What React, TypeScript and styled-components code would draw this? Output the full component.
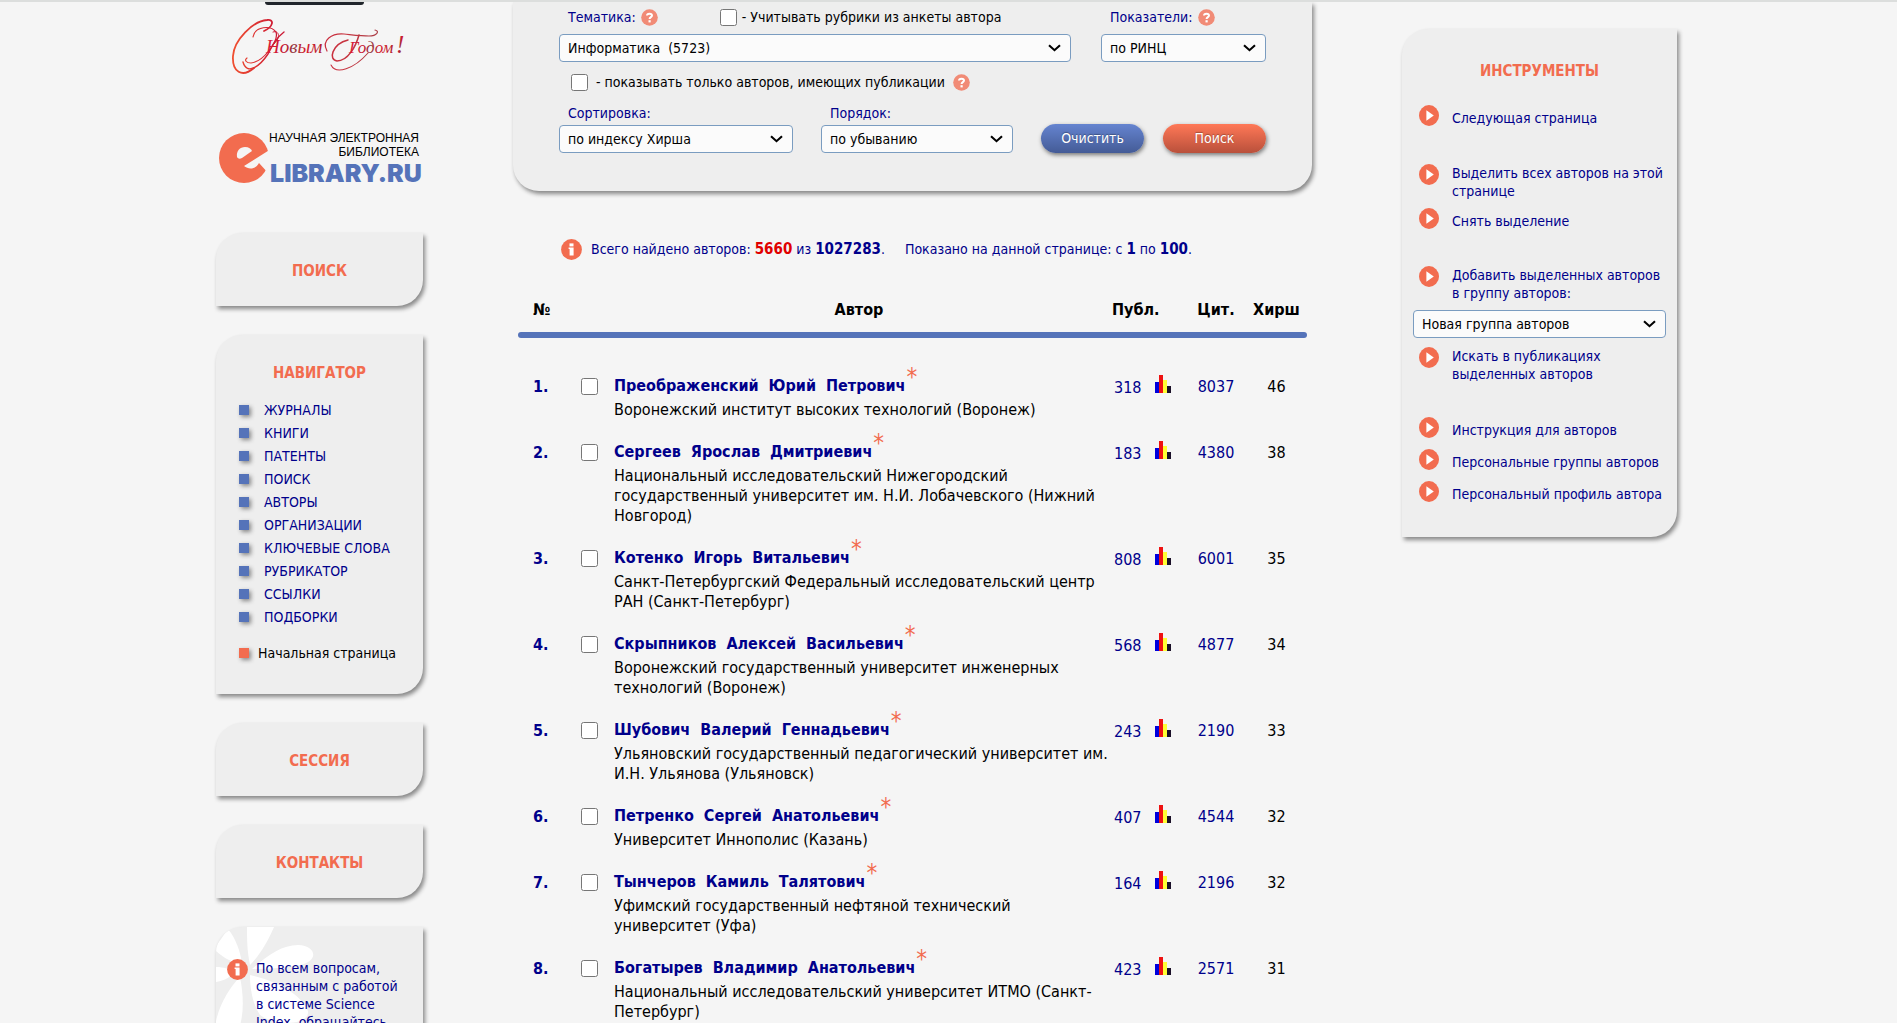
import React from "react";
import styled, { createGlobalStyle } from "styled-components";

const font = `"DejaVu Sans Condensed", "Noto Sans", sans-serif`;
const navy = "#00008b";
const coral = "#f26c4f";
const blue = "#5573b9";

const GlobalStyle = createGlobalStyle`
  * { box-sizing: border-box; }
  body { margin: 0; background: #f5f5f5; color: #000; font-family: ${font}; font-size: 14px; }
  a { color: ${navy}; text-decoration: none; }
`;

const Page = styled.div`
  height: 100vh;
  overflow: hidden;
  border-top: 2px solid #dcdedd;
`;

const Shell = styled.div`
  max-width: 1465px;
  margin: 0 auto;
  padding-right: 4px;
  display: grid;
  grid-template-columns: 207px minmax(0, 1fr) 275px;
  gap: 90px;
  align-items: start;
`;

const Sidebar = styled.aside`
  display: flex;
  flex-direction: column;
  gap: 29px;
`;

const Brand = styled.header`
  height: 202px;
  display: flex;
  flex-direction: column;
`;

const BrandArt = styled.svg`
  display: block;
  width: 207px;
  overflow: visible;
`;

const Panel = styled.section`
  position: relative;
  background: #eee;
  border-radius: 26px 0 26px 0;
  box-shadow: 2px 3px 4px #888;
`;

const PanelTitle = styled.h2`
  margin: 0;
  font-size: 15px;
  line-height: 20px;
  text-align: center;
  color: ${coral};
`;

const ShortPanel = styled(Panel)`
  padding: 28px 0 25px;
`;

const NavPanel = styled(Panel)`
  height: 359px;
  padding: 28px 22px;
`;

const NavList = styled.ul`
  list-style: none;
  margin: 15px 0 0;
  padding: 0;
`;

const NavItem = styled.li<{ $home?: boolean }>`
  display: flex;
  align-items: center;
  gap: ${(p) => (p.$home ? 9 : 15)}px;
  height: 23px;
  white-space: nowrap;
  margin-top: ${(p) => (p.$home ? 13 : 0)}px;
  a { color: ${(p) => (p.$home ? "#000" : navy)}; }
  &::before {
    content: "";
    width: 10px;
    height: 10px;
    margin-left: 1px;
    background: ${(p) => (p.$home ? coral : blue)};
    box-shadow: 2px 2px 4px #888;
  }
`;

const InfoPanel = styled(Panel)`
  height: 200px;
  overflow: hidden;
  padding: 32px 11px;
`;

const Flower = styled.svg`
  position: absolute;
  left: 0;
  top: 0;
`;

const InfoBody = styled.div`
  position: relative;
  display: flex;
  gap: 8px;
  color: ${navy};
  line-height: 18px;
`;

const InfoText = styled.p`
  margin: 0;
  white-space: nowrap;
`;

const FilterForm = styled.form`
  height: 189px;
  padding: 2px 46px 0 46px;
  background: #eee;
  border-radius: 0 0 26px 26px;
  box-shadow: 2px 3px 4px #888;
`;

const FilterRow = styled.div<{ $gap: number }>`
  display: flex;
  align-items: flex-end;
  gap: ${(p) => p.$gap}px;
`;

const Field = styled.div<{ $width?: number }>`
  display: flex;
  flex-direction: column;
  flex: ${(p) => (p.$width ? "none" : "1")};
  width: ${(p) => (p.$width ? p.$width + "px" : "auto")};
`;

const OrderField = styled(Field)`
  margin-left: 28px;
`;

const FieldHead = styled.div`
  display: flex;
  align-items: center;
  height: 26px;
  margin-bottom: 4px;
  padding-left: 9px;
  gap: 5px;
  color: ${navy};
`;

const SortHead = styled(FieldHead)`
  height: 21px;
  margin-bottom: 2px;
`;

const CheckLine = styled.div<{ $inset?: boolean }>`
  display: flex;
  align-items: center;
  gap: ${(p) => (p.$inset ? 8 : 5)}px;
  height: ${(p) => (p.$inset ? 40 : 26)}px;
  padding-left: ${(p) => (p.$inset ? 12 : 57)}px;
  color: #000;
`;

const Tick = styled.input`
  width: 17px;
  height: 17px;
  margin: 0;
  flex: none;
`;

const SelectBox = styled.div`
  position: relative;
  display: flex;
  svg {
    position: absolute;
    right: 10px;
    top: 10px;
    pointer-events: none;
  }
`;

const SelectInput = styled.select`
  appearance: none;
  width: 100%;
  height: 28px;
  padding: 0 28px 0 8px;
  border: 1px solid #7a9cc0;
  border-radius: 4px;
  background-color: #fbfbfb;
  color: #000;
  font-family: ${font};
  font-size: 14px;
`;

const Select = ({ children, ...rest }: React.ComponentProps<"select">) => (
  <SelectBox>
    <SelectInput {...rest}>{children}</SelectInput>
    <svg width="13" height="8" viewBox="0 0 13 8" aria-hidden="true">
      <path d="M1 1.2 L6.5 6.2 L12 1.2" fill="none" stroke="#000" strokeWidth="2.1" />
    </svg>
  </SelectBox>
);

const Button = styled.button<{ $kind: "blue" | "red" }>`
  width: 103px;
  height: 29px;
  margin-left: ${(p) => (p.$kind === "red" ? 19 : 28)}px;
  padding: 0 0 2px;
  border: 0;
  border-radius: 15px;
  background: ${(p) =>
    p.$kind === "red"
      ? "linear-gradient(#ff7857, #b9503b)"
      : "linear-gradient(#6584d0, #445b96)"};
  box-shadow: 1px 2px 4px #777;
  color: #fff;
  font-family: ${font};
  font-size: 14px;
  text-shadow: 0 -1px 1px rgba(0, 0, 0, 0.3);
`;

const Summary = styled.div`
  display: flex;
  align-items: center;
  gap: 9px;
  margin: 45px 0 0 48px;
  height: 26px;
  color: ${navy};
  white-space: pre;
  b { font-size: 15px; }
`;

const Found = styled.b`
  color: #e00000;
`;

const Authors = styled.table`
  width: calc(100% - 10px);
  margin: 33px 5px 0;
  table-layout: fixed;
  border-collapse: collapse;
  font-size: 16px;
  th, td { padding: 0; vertical-align: top; }
`;

const HeadCell = styled.th<{ $left?: number }>`
  height: 37px;
  line-height: 30px;
  text-align: ${(p) => (p.$left ? "left" : "center")};
  && { padding-left: ${(p) => p.$left ?? 0}px; }
`;

const Rule = styled.div`
  height: 6px;
  margin-bottom: 37px;
  border-radius: 3px;
  background: ${blue};
`;

const NumberCell = styled.td`
  && { padding-left: 15px; }
  color: ${navy};
  font-weight: bold;
  line-height: 24px;
`;

const TickCell = styled.td`
  && { padding: 3px 0 0 10px; }
`;

const AuthorCell = styled.td`
  && { padding-bottom: 21px; }
`;

const AuthorName = styled.a`
  display: flex;
  height: 25px;
  line-height: 21px;
  font-weight: bold;
  white-space: pre;
`;

const Star = styled.span`
  margin: -8px 0 0 1px;
  color: ${coral};
  font-size: 24px;
  font-weight: normal;
`;

const Affiliation = styled.div`
  line-height: 20px;
  white-space: nowrap;
`;

const Publications = styled.div`
  display: flex;
  gap: 14px;
  padding-left: 10px;
  line-height: 26px;
`;

const CountCell = styled.td`
  text-align: center;
  line-height: 24px;
`;

const Tools = styled(Panel)`
  height: 508px;
  margin-top: 27px;
  padding: 32px 11px;
`;

const ToolList = styled.div`
  display: flex;
  flex-direction: column;
  padding-top: 24px;
`;

const Tool = styled.a<{ $before?: number; $drop?: number }>`
  display: flex;
  gap: 13px;
  margin-top: ${(p) => p.$before ?? 0}px;
  padding-left: 6px;
  line-height: 18px;
  svg { flex: none; }
  span { padding-top: ${(p) => p.$drop ?? 0}px; white-space: pre; }
`;

const ToolSelect = styled.div`
  margin: 8px 0 9px;
`;

const HelpIcon = () => (
  <svg width="17" height="17" viewBox="0 0 17 17" aria-hidden="true">
    <circle cx="8.5" cy="8.5" r="8.3" fill="#f18b76" />
    <path d="M6 6.6 C6 4 11 4 11 6.6 C11 8.2 8.6 8.1 8.6 10" fill="none" stroke="#fff" strokeWidth="2" />
    <rect x="7.5" y="11.2" width="2.2" height="2.2" fill="#fff" />
  </svg>
);

const InfoGlyph = styled.svg`
  flex: none;
`;

const InfoIcon = () => (
  <InfoGlyph width="21" height="21" viewBox="0 0 21 21" aria-hidden="true">
    <circle cx="10.5" cy="10.5" r="10.4" fill={coral} />
    <rect x="8.5" y="4.4" width="4" height="3" fill="#fff" />
    <path d="M7.6 8.4H12.6V16.6H8.6V10H7.6Z" fill="#fff" />
  </InfoGlyph>
);

const PlayIcon = () => (
  <svg width="20" height="21" viewBox="0 0 20 21" aria-hidden="true">
    <ellipse cx="10" cy="10.5" rx="10" ry="10.4" fill={coral} />
    <path d="M7.4 5.3V15.7L14.8 10.5Z" fill="#fff" />
  </svg>
);

const BarsIcon = () => (
  <svg width="16" height="18" viewBox="0 0 16 18" aria-hidden="true">
    <rect x="0" y="7" width="4" height="11" fill="#0000dd" />
    <rect x="4" y="0" width="4" height="18" fill="#ee1111" />
    <rect x="8" y="5" width="4" height="13" fill="#ffff33" />
    <rect x="12" y="11" width="4" height="7" fill="#1a1028" />
  </svg>
);

const Greeting = () => (
  <BrandArt height="100" viewBox="0 0 207 100" role="img" aria-label="С Новым Годом!">
    <defs>
      <linearGradient id="festive" x1="0" x2="1">
        <stop offset="0" stopColor="#e0203a" />
        <stop offset="0.35" stopColor="#c41230" />
        <stop offset="0.5" stopColor="#8e3440" />
        <stop offset="0.7" stopColor="#d8182c" />
        <stop offset="1" stopColor="#b01c2c" />
      </linearGradient>
      <linearGradient id="swash" gradientUnits="userSpaceOnUse" x1="16" y1="0" x2="165" y2="0">
        <stop offset="0" stopColor="#f05030" />
        <stop offset="0.3" stopColor="#cc1834" />
        <stop offset="0.75" stopColor="#c83440" />
        <stop offset="1" stopColor="#a84048" />
      </linearGradient>
    </defs>
    <rect x="49" y="-3" width="99" height="6" rx="3" fill="#20252b" />
    <g fill="none" stroke="url(#swash)" strokeLinecap="round">
      <path d="M48 29 C57 25 59 17 51 18 C37 19 18 38 17 54 C16 70 26 76 38 66" strokeWidth="1.8" />
      <path d="M37 35 C39 24 55 23 60 30 C63 39 47 60 35 61 C30 61 28 58 31 56" strokeWidth="1.2" />
      <path d="M27 60 C31 74 44 64 52 52 C56 44 60 36 68 30" strokeWidth="1.4" />
      <path d="M57 30 C62 28 66 34 58 42" strokeWidth="1" />
      <path d="M111 49 C105 38 116 31 128 32 C138 33 146 34 153 34 C161 34 164 29 159 28" strokeWidth="1.2" />
      <path d="M132 38 C116 42 112 58 121 59 C132 59 140 44 143 33" strokeWidth="1.5" />
      <path d="M115 63 C120 73 138 67 152 51" strokeWidth="1.1" />
    </g>
    <g fill="url(#festive)" fontFamily="'Liberation Serif', serif" fontStyle="italic">
      <text x="50" y="51" fontSize="19">Новым</text>
      <text x="133" y="51" fontSize="17">Годом</text>
      <text x="180" y="51" fontSize="25">!</text>
    </g>
  </BrandArt>
);

const Logo = () => (
  <BrandArt height="102" viewBox="0 100 207 102" role="img" aria-label="Научная электронная библиотека eLIBRARY.RU">
    <circle cx="28" cy="156" r="25" fill={coral} />
    <path d="M21 155 C20 149 24 145 29 145 C33 145 35 147 36 149 L26 156 C24 157 22 157 21 155Z" fill="#f5f5f5" />
    <path d="M55 147 L28 164 C33 168 40 167 43 161 L53 172 L58 150Z" fill="#f5f5f5" />
    <g fontFamily="'Liberation Sans', Arial, sans-serif" fontSize="12" textAnchor="end">
      <text x="203" y="140">НАУЧНАЯ ЭЛЕКТРОННАЯ</text>
      <text x="203" y="154">БИБЛИОТЕКА</text>
    </g>
    <text x="54" y="180" fontFamily="Inter, sans-serif" fontWeight="900" fontSize="25" fill={blue}>LIBRARY.RU</text>
  </BrandArt>
);

const navLinks = ["ЖУРНАЛЫ", "КНИГИ", "ПАТЕНТЫ", "ПОИСК", "АВТОРЫ", "ОРГАНИЗАЦИИ", "КЛЮЧЕВЫЕ СЛОВА", "РУБРИКАТОР", "ССЫЛКИ", "ПОДБОРКИ"];

const authors: [string, string[], number, number, number][] = [
  ["Преображенский  Юрий  Петрович", ["Воронежский институт высоких технологий (Воронеж)"], 318, 8037, 46],
  ["Сергеев  Ярослав  Дмитриевич", ["Национальный исследовательский Нижегородский", "государственный университет им. Н.И. Лобачевского (Нижний", "Новгород)"], 183, 4380, 38],
  ["Котенко  Игорь  Витальевич", ["Санкт-Петербургский Федеральный исследовательский центр", "РАН (Санкт-Петербург)"], 808, 6001, 35],
  ["Скрыпников  Алексей  Васильевич", ["Воронежский государственный университет инженерных", "технологий (Воронеж)"], 568, 4877, 34],
  ["Шубович  Валерий  Геннадьевич", ["Ульяновский государственный педагогический университет им.", "И.Н. Ульянова (Ульяновск)"], 243, 2190, 33],
  ["Петренко  Сергей  Анатольевич", ["Университет Иннополис (Казань)"], 407, 4544, 32],
  ["Тынчеров  Камиль  Талятович", ["Уфимский государственный нефтяной технический", "университет (Уфа)"], 164, 2196, 32],
  ["Богатырев  Владимир  Анатольевич", ["Национальный исследовательский университет ИТМО (Санкт-", "Петербург)"], 423, 2571, 31],
];

const Lines = ({ parts }: { parts: string[] }) => (
  <>
    {parts.map((part, i) => (
      <React.Fragment key={part}>
        {i > 0 && <br />}
        {part}
      </React.Fragment>
    ))}
  </>
);

export default function App() {
  return (
    <Page>
      <GlobalStyle />
      <Shell>
        <Sidebar>
          <Brand>
            <Greeting />
            <Logo />
          </Brand>
          <ShortPanel><PanelTitle>ПОИСК</PanelTitle></ShortPanel>
          <NavPanel>
            <PanelTitle>НАВИГАТОР</PanelTitle>
            <NavList>
              {navLinks.map((link) => (
                <NavItem key={link}><a href="#">{link}</a></NavItem>
              ))}
              <NavItem $home><a href="#">Начальная страница</a></NavItem>
            </NavList>
          </NavPanel>
          <ShortPanel><PanelTitle>СЕССИЯ</PanelTitle></ShortPanel>
          <ShortPanel><PanelTitle>КОНТАКТЫ</PanelTitle></ShortPanel>
          <InfoPanel>
            <Flower width="110" height="110" viewBox="0 0 110 110" aria-hidden="true">
              <g fill="#fff">
                <path d="M34 38 C31 24 31 12 31 0 H58 C52 14 44 28 34 38Z" />
                <path d="M36 42 C52 28 66 18 82 18 C102 19 102 35 84 38 C68 41 54 42 36 42Z" />
                <path d="M34 48 C60 54 84 66 92 84 C94 98 60 100 44 88 C36 76 34 60 34 48Z" />
                <path d="M24 50 C28 70 28 90 22 104 H0 V94 C4 76 14 60 24 50Z" />
                <path d="M26 36 C24 24 20 12 12 2 L-2 22 C6 30 16 36 26 36Z" />
                <path d="M18 46 C12 52 6 54 0 55 V40 C8 40 14 42 18 46Z" />
              </g>
            </Flower>
            <InfoBody>
              <InfoIcon />
              <InfoText>
                <Lines parts={["По всем вопросам,", "связанным с работой", "в системе Science", "Index, обращайтесь"]} />
              </InfoText>
            </InfoBody>
          </InfoPanel>
        </Sidebar>

        <main>
          <FilterForm>
            <FilterRow $gap={30}>
              <Field>
                <FieldHead>
                  <label htmlFor="topic">Тематика:</label>
                  <HelpIcon />
                  <CheckLine>
                    <Tick type="checkbox" id="rubrics" />
                    <label htmlFor="rubrics">- Учитывать рубрики из анкеты автора</label>
                  </CheckLine>
                </FieldHead>
                <Select id="topic"><option>Информатика&nbsp; (5723)</option></Select>
              </Field>
              <Field $width={165}>
                <FieldHead>
                  <label htmlFor="metrics">Показатели:</label>
                  <HelpIcon />
                </FieldHead>
                <Select id="metrics"><option>по РИНЦ</option></Select>
              </Field>
            </FilterRow>
            <CheckLine $inset>
              <Tick type="checkbox" id="published" />
              <label htmlFor="published">- показывать только авторов, имеющих публикации</label>
              <HelpIcon />
            </CheckLine>
            <FilterRow $gap={0}>
              <Field $width={234}>
                <SortHead><label htmlFor="sort">Сортировка:</label></SortHead>
                <Select id="sort"><option>по индексу Хирша</option></Select>
              </Field>
              <OrderField $width={192}>
                <SortHead><label htmlFor="order">Порядок:</label></SortHead>
                <Select id="order"><option>по убыванию</option></Select>
              </OrderField>
              <Button type="button" $kind="blue">Очистить</Button>
              <Button type="button" $kind="red">Поиск</Button>
            </FilterRow>
          </FilterForm>

          <Summary>
            <InfoIcon />
            <span>
              Всего найдено авторов: <Found>5660</Found> из <b>1027283</b>.{"\u00a0\u00a0\u00a0\u00a0 "}Показано на данной странице: с <b>1</b> по <b>100</b>.
            </span>
          </Summary>

          <Authors>
            <colgroup>
              <col style={{ width: 53 }} />
              <col style={{ width: 43 }} />
              <col />
              <col style={{ width: 82 }} />
              <col style={{ width: 60 }} />
              <col style={{ width: 61 }} />
            </colgroup>
            <thead>
              <tr>
                <HeadCell $left={15}>№</HeadCell>
                <HeadCell />
                <HeadCell>Автор</HeadCell>
                <HeadCell $left={8}>Публ.</HeadCell>
                <HeadCell>Цит.</HeadCell>
                <HeadCell>Хирш</HeadCell>
              </tr>
              <tr><th colSpan={6}><Rule /></th></tr>
            </thead>
            <tbody>
              {authors.map(([name, place, publications, citations, hirsch], i) => (
                <tr key={name}>
                  <NumberCell>{i + 1}.</NumberCell>
                  <TickCell><Tick type="checkbox" aria-label={name} /></TickCell>
                  <AuthorCell>
                    <AuthorName href="#">{name}<Star>*</Star></AuthorName>
                    <Affiliation><Lines parts={place} /></Affiliation>
                  </AuthorCell>
                  <td>
                    <Publications><a href="#">{publications}</a><a href="#" aria-label="Анализ публикаций"><BarsIcon /></a></Publications>
                  </td>
                  <CountCell><a href="#">{citations}</a></CountCell>
                  <CountCell>{hirsch}</CountCell>
                </tr>
              ))}
            </tbody>
          </Authors>
        </main>

        <Tools>
          <PanelTitle>ИНСТРУМЕНТЫ</PanelTitle>
          <ToolList>
            <Tool href="#" $drop={4}><PlayIcon /><span>Следующая страница</span></Tool>
            <Tool href="#" $before={37}><PlayIcon /><span><Lines parts={["Выделить всех авторов на этой", "странице"]} /></span></Tool>
            <Tool href="#" $before={8} $drop={4}><PlayIcon /><span>Снять выделение</span></Tool>
            <Tool href="#" $before={36}><PlayIcon /><span><Lines parts={["Добавить выделенных авторов", "в группу авторов:"]} /></span></Tool>
            <ToolSelect><Select aria-label="Группа авторов"><option>Новая группа авторов</option></Select></ToolSelect>
            <Tool href="#"><PlayIcon /><span><Lines parts={["Искать в публикациях", "выделенных авторов"]} /></span></Tool>
            <Tool href="#" $before={34} $drop={4}><PlayIcon /><span>Инструкция для авторов</span></Tool>
            <Tool href="#" $before={10} $drop={4}><PlayIcon /><span>Персональные группы авторов</span></Tool>
            <Tool href="#" $before={10} $drop={4}><PlayIcon /><span>Персональный профиль автора</span></Tool>
          </ToolList>
        </Tools>
      </Shell>
    </Page>
  );
}
